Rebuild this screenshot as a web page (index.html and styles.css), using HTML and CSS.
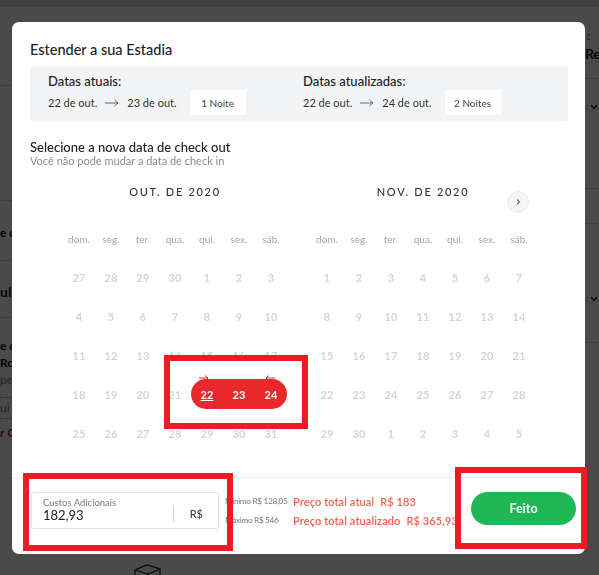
FILE: index.html
```html
<!DOCTYPE html>
<html lang="pt-BR">
<head>
<meta charset="utf-8">
<title>Estender a sua Estadia</title>
<link rel="stylesheet" href="styles.css">
</head>
<body>
<div class="page">
  <div class="topbar"></div>
  <div class="page-body">
    <div class="side side-left">
      <div class="ln l1"></div>
      <div class="ln l2"></div>
      <div class="frag f1">e o</div>
      <div class="ln l3"></div>
      <div class="frag bold f2">ult</div>
      <div class="ln l4"></div>
      <div class="frag f3">e o</div>
      <div class="frag f4">Ro</div>
      <div class="frag grey f5">pe</div>
      <div class="dash d1"></div>
      <div class="frag grey f6">ui</div>
      <div class="dash d2"></div>
      <div class="frag red f7">r C</div>
    </div>
    <div class="page-main">
      <svg class="box-icon" width="30" height="12" viewBox="0 0 30 12"><path d="M2 11 L2 6 L14 1 L27 5 L27 11 M2 6 L15 10 L27 5 M15 10 L15 12" fill="none" stroke="#222" stroke-width="1.3"/></svg>
    </div>
    <div class="side side-right">
      <div class="frag r1">:</div>
      <div class="frag bold r2">Re</div>
      <div class="ln rl1"></div>
      <svg class="chev c1" width="8" height="6" viewBox="0 0 8 6"><path d="M1 1 L4 4.5 L7 1" fill="none" stroke="#222" stroke-width="1.2"/></svg>
      <div class="ln rl2"></div>
      <div class="ln rl3"></div>
      <svg class="chev c2" width="8" height="6" viewBox="0 0 8 6"><path d="M1 1 L4 4.5 L7 1" fill="none" stroke="#222" stroke-width="1.2"/></svg>
      <div class="ln rl4"></div>
    </div>
  </div>
</div>

<div class="overlay">
  <div class="modal">
    <h1 class="title">Estender a sua Estadia</h1>

    <div class="dates">
      <div class="dgroup">
        <div class="dlabel">Datas atuais:</div>
        <div class="drow">
          <span>22 de out.</span>
          <svg class="darrow" width="14" height="8" viewBox="0 0 14 8"><path d="M0 4 H13 M9.5 1 L13 4 L9.5 7" fill="none" stroke="#555" stroke-width="0.9"/></svg>
          <span>23 de out.</span>
          <span class="nights">1 Noite</span>
        </div>
      </div>
      <div class="dgroup">
        <div class="dlabel">Datas atualizadas:</div>
        <div class="drow">
          <span>22 de out.</span>
          <svg class="darrow" width="14" height="8" viewBox="0 0 14 8"><path d="M0 4 H13 M9.5 1 L13 4 L9.5 7" fill="none" stroke="#555" stroke-width="0.9"/></svg>
          <span>24 de out.</span>
          <span class="nights">2 Noites</span>
        </div>
      </div>
    </div>

    <div class="sel">
      <div class="sel-title">Selecione a nova data de check out</div>
      <div class="sel-sub">Você não pode mudar a data de check in</div>
    </div>

    <div class="calendars">
      <div class="month">
        <div class="mtitle">OUT. DE 2020</div>
        <div class="weekdays"><span>dom.</span><span>seg.</span><span>ter.</span><span>qua.</span><span>qui.</span><span>sex.</span><span>sáb.</span></div>
        <div class="days">
          <div class="day"><span class="num">27</span></div>
          <div class="day"><span class="num">28</span></div>
          <div class="day"><span class="num">29</span></div>
          <div class="day"><span class="num">30</span></div>
          <div class="day"><span class="num">1</span></div>
          <div class="day"><span class="num">2</span></div>
          <div class="day"><span class="num">3</span></div>
          <div class="day"><span class="num">4</span></div>
          <div class="day"><span class="num">5</span></div>
          <div class="day"><span class="num">6</span></div>
          <div class="day"><span class="num">7</span></div>
          <div class="day"><span class="num">8</span></div>
          <div class="day"><span class="num">9</span></div>
          <div class="day"><span class="num">10</span></div>
          <div class="day"><span class="num">11</span></div>
          <div class="day"><span class="num">12</span></div>
          <div class="day"><span class="num">13</span></div>
          <div class="day"><span class="num">14</span></div>
          <div class="day"><span class="num">15</span></div>
          <div class="day"><span class="num">16</span></div>
          <div class="day"><span class="num">17</span></div>
          <div class="day"><span class="num">18</span></div>
          <div class="day"><span class="num">19</span></div>
          <div class="day"><span class="num">20</span></div>
          <div class="day"><span class="num">21</span></div>
          <div class="day range start">
            <svg class="rarrow" width="10" height="6" viewBox="0 0 10 6"><path d="M0 3 H9 M6 0.5 L9 3 L6 5.5" fill="none" stroke="#e8282b" stroke-width="1"/></svg>
            <span class="num"><u>22</u></span>
          </div>
          <div class="day range"><span class="num">23</span></div>
          <div class="day range end">
            <svg class="rarrow" width="10" height="6" viewBox="0 0 10 6"><path d="M10 3 H1 M4 0.5 L1 3 L4 5.5" fill="none" stroke="#e8282b" stroke-width="1"/></svg>
            <span class="num">24</span>
          </div>
          <div class="day"><span class="num">25</span></div>
          <div class="day"><span class="num">26</span></div>
          <div class="day"><span class="num">27</span></div>
          <div class="day"><span class="num">28</span></div>
          <div class="day"><span class="num">29</span></div>
          <div class="day"><span class="num">30</span></div>
          <div class="day"><span class="num">31</span></div>
        </div>
      </div>
      <div class="month">
        <div class="mtitle">NOV. DE 2020</div>
        <div class="weekdays"><span>dom.</span><span>seg.</span><span>ter.</span><span>qua.</span><span>qui.</span><span>sex.</span><span>sáb.</span></div>
        <div class="days">
          <div class="day"><span class="num">1</span></div>
          <div class="day"><span class="num">2</span></div>
          <div class="day"><span class="num">3</span></div>
          <div class="day"><span class="num">4</span></div>
          <div class="day"><span class="num">5</span></div>
          <div class="day"><span class="num">6</span></div>
          <div class="day"><span class="num">7</span></div>
          <div class="day"><span class="num">8</span></div>
          <div class="day"><span class="num">9</span></div>
          <div class="day"><span class="num">10</span></div>
          <div class="day"><span class="num">11</span></div>
          <div class="day"><span class="num">12</span></div>
          <div class="day"><span class="num">13</span></div>
          <div class="day"><span class="num">14</span></div>
          <div class="day"><span class="num">15</span></div>
          <div class="day"><span class="num">16</span></div>
          <div class="day"><span class="num">17</span></div>
          <div class="day"><span class="num">18</span></div>
          <div class="day"><span class="num">19</span></div>
          <div class="day"><span class="num">20</span></div>
          <div class="day"><span class="num">21</span></div>
          <div class="day"><span class="num">22</span></div>
          <div class="day"><span class="num">23</span></div>
          <div class="day"><span class="num">24</span></div>
          <div class="day"><span class="num">25</span></div>
          <div class="day"><span class="num">26</span></div>
          <div class="day"><span class="num">27</span></div>
          <div class="day"><span class="num">28</span></div>
          <div class="day"><span class="num">29</span></div>
          <div class="day"><span class="num">30</span></div>
          <div class="day"><span class="num">1</span></div>
          <div class="day"><span class="num">2</span></div>
          <div class="day"><span class="num">3</span></div>
          <div class="day"><span class="num">4</span></div>
          <div class="day"><span class="num">5</span></div>
        </div>
      </div>
      <button class="nav-next" aria-label="Próximo mês">
        <svg width="8" height="8" viewBox="0 0 8 8"><path d="M3 1.5 L5.5 4 L3 6.5" fill="none" stroke="#666" stroke-width="1.1"/></svg>
      </button>
    </div>

    <div class="footer">
      <div class="cost">
        <div class="cost-text">
          <div class="cost-label">Custos Adicionais</div>
          <div class="cost-value">182,93</div>
        </div>
        <div class="cost-sep"></div>
        <div class="cost-cur">R$</div>
      </div>
      <div class="limits">
        <div>Mínimo R$ 128,05</div>
        <div>Máximo R$ 546</div>
      </div>
      <div class="totals">
        <div>Preço total atual<span class="amt">R$ 183</span></div>
        <div>Preço total atualizado<span class="amt">R$ 365,93</span></div>
      </div>
      <button class="done">Feito</button>
    </div>
  </div>
</div>

<div class="annot annot-range"></div>
<div class="annot annot-cost"></div>
<div class="annot annot-done"></div>
</body>
</html>
```

FILE: styles.css
```css
* { box-sizing: border-box; }
html, body { margin: 0; padding: 0; }
body {
  width: 599px;
  height: 575px;
  overflow: hidden;
  position: relative;
  font-family: Lato, "Noto Sans", sans-serif;
  background: #f7f7f7;
  color: #222;
}

/* ---------- page behind the dialog ---------- */
.page { height: 575px; display: flex; flex-direction: column; }
.topbar { height: 7px; background: #d6d6d6; flex: none; }
.page-body { flex: 1; display: flex; }
.side { flex: none; display: flex; flex-direction: column; }
.side-left { width: 12px; }
.side-right { width: 14px; }
.page-main { flex: 1; display: flex; flex-direction: column; justify-content: flex-end; }
.box-icon { margin-left: 121px; margin-bottom: -1px; }

.ln { height: 1px; background: #cfcfcf; flex: none; }
.dash { height: 0; border-top: 1px dashed #9a9a9a; flex: none; }
.frag { height: 14px; line-height: 14px; font-size: 13px; white-space: nowrap; flex: none; color: #111; }
.frag.bold { font-weight: 700; font-size: 14px; }
.frag.grey { color: #777; }
.frag.red { color: #b3262b; font-weight: 700; }

.l1 { margin-top: 78px; }
.l2 { margin-top: 114px; }
.f1 { margin-top: 25px; font-weight: 700; font-size: 12px; }
.l3 { margin-top: 20px; }
.f2 { margin-top: 24px; font-size: 13px; }
.l4 { margin-top: 18px; }
.f3 { margin-top: 21px; font-weight: 700; font-size: 12px; }
.f4 { margin-top: 3px; font-weight: 700; font-size: 12px; }
.f5 { margin-top: 3px; font-size: 12px; }
.d1 { margin-top: 10px; }
.f6 { margin-top: 3px; font-size: 12px; }
.d2 { margin-top: 3px; }
.f7 { margin-top: 7px; font-size: 12px; }

.r1 { margin-top: 22px; margin-left: 2px; font-size: 12px; }
.r2 { margin-top: 4px; margin-left: 0; font-size: 11px; letter-spacing: -0.3px; }
.rl1 { margin-top: 17px; }
.chev { flex: none; margin-left: 5px; }
.c1 { margin-top: 25px; }
.rl2 { margin-top: 78px; }
.rl3 { margin-top: 34px; }
.c2 { margin-top: 72px; }
.rl4 { margin-top: 40px; }

/* ---------- overlay + dialog ---------- */
.overlay {
  position: fixed;
  inset: 0;
  background: rgba(0, 0, 0, 0.7);
  padding: 22px 0 0 12px;
}
.modal {
  width: 573px;
  height: 532px;
  background: #fff;
  border-radius: 7px;
  padding: 19px 17px 0 18px;
  display: flex;
  flex-direction: column;
}
.title {
  margin: 0;
  font-size: 14.5px;
  line-height: 18px;
  font-weight: 500;
  color: #222;
}

.dates {
  margin-top: 7px;
  height: 55px;
  background: #f3f4f5;
  border-radius: 3px;
  padding: 7px 18px 0;
  display: grid;
  grid-template-columns: 255px 1fr;
}
.dlabel { font-size: 13px; line-height: 16px; font-weight: 500; color: #222; }
.drow {
  margin-top: 1px;
  height: 25px;
  display: flex;
  align-items: center;
  font-size: 11px;
  color: #333;
}
.darrow { margin: 0 8px; }
.nights {
  margin-left: 13px;
  width: 56px;
  height: 25px;
  background: #fff;
  display: flex;
  align-items: center;
  justify-content: center;
  font-size: 10px;
  color: #444;
}

.sel { margin-top: 18px; }
.sel-title { font-size: 13px; line-height: 16px; font-weight: 500; color: #222; }
.sel-sub { font-size: 11px; line-height: 12px; color: #8c8c8c; }

.calendars {
  margin-top: 17px;
  display: flex;
  justify-content: center;
  gap: 24px;
  position: relative;
}
.month { width: 224px; }
.mtitle {
  text-align: center;
  font-size: 11px;
  line-height: 16px;
  letter-spacing: 1.7px;
  color: #333;
  font-weight: 500;
}
.weekdays {
  margin-top: 29px;
  height: 20px;
  display: grid;
  grid-template-columns: repeat(7, 32px);
  align-items: center;
  justify-items: center;
  font-size: 10px;
  color: #9ea6a6;
}
.days {
  margin-top: 9px;
  display: grid;
  grid-template-columns: repeat(7, 32px);
  grid-auto-rows: 39px;
}
.day {
  position: relative;
  padding-top: 4px;
  font-size: 11px;
  font-weight: 700;
  color: #d3d6d6;
}
.num {
  height: 30px;
  display: flex;
  align-items: center;
  justify-content: center;
}
.range .num { background: #e8282b; color: #fff; }
.range.start .num { border-radius: 15px 0 0 15px; }
.range.end .num { border-radius: 0 15px 15px 0; }
.rarrow { position: absolute; top: 0; z-index: 1; }
.start .rarrow { left: 8px; }
.end .rarrow { left: 10px; }

.nav-next {
  position: absolute;
  left: 477px;
  top: 7px;
  width: 22px;
  height: 22px;
  border-radius: 50%;
  background: #f6f6f6;
  border: 1px solid #ebebeb;
  padding: 0;
  display: flex;
  align-items: center;
  justify-content: center;
}

.footer {
  margin: 24px -17px 0 -18px;
  border-top: 1px solid #ececec;
  padding: 14px 9px 0 19px;
  display: flex;
  align-items: flex-start;
}
.cost {
  width: 188px;
  height: 37px;
  flex: none;
  border: 1px solid #e5e5e5;
  border-radius: 3px;
  background: #fff;
  display: flex;
  align-items: flex-start;
  padding: 4px 15px 0 11px;
}
.cost-label { font-size: 9.5px; line-height: 11px; color: #7a7a7a; }
.cost-value { font-size: 13px; line-height: 15px; color: #222; }
.cost-sep { margin-left: auto; margin-top: 9px; width: 1px; height: 16px; background: #d2d2d2; }
.cost-cur { margin-left: 16px; margin-top: 10px; font-size: 11px; line-height: 14px; color: #333; }

.limits {
  margin-left: 6px;
  flex: 0 0 61px;
  min-width: 0;
  font-size: 8.3px;
  letter-spacing: -0.35px;
  line-height: 19px;
  color: #777;
  white-space: nowrap;
}
.totals {
  margin-left: 7px;
  flex: 0 0 160px;
  min-width: 0;
  font-size: 11px;
  letter-spacing: 0.1px;
  line-height: 19px;
  font-weight: 600;
  color: #f2604d;
  white-space: nowrap;
}
.amt { margin-left: 6px; }

.done {
  margin-left: auto;
  width: 105px;
  height: 33px;
  flex: none;
  border: none;
  border-radius: 17px;
  background: #1fb655;
  color: #fff;
  font-family: inherit;
  font-size: 12.5px;
  font-weight: 700;
}

/* ---------- red annotation frames on the screenshot ---------- */
.annot {
  position: fixed;
  border: 6px solid #ed1c24;
  z-index: 10;
}
.annot-range { left: 164px; top: 355px; width: 144px; height: 74px; }
.annot-cost { left: 23px; top: 473px; width: 210px; height: 78px; }
.annot-done { left: 455px; top: 467px; width: 132px; height: 82px; }
```
